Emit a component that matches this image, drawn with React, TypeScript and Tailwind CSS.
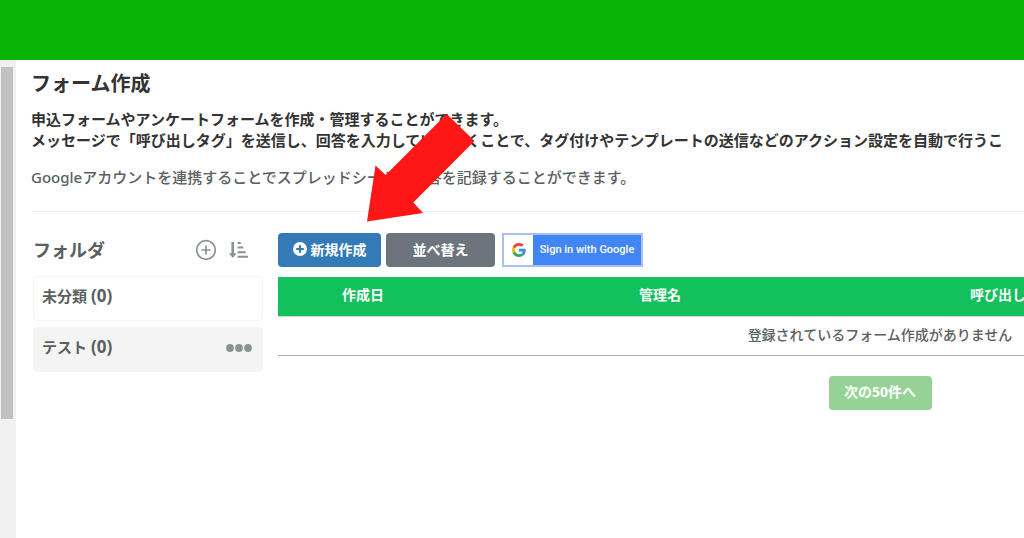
import React from 'react';

const folders = [
  { name: '未分類', count: 0, active: false },
  { name: 'テスト', count: 0, active: true },
];

const columns = [
  { label: '作成日', width: 'w-[170px]' },
  { label: '管理名', width: 'w-[424px]' },
  { label: '呼び出しタグ', width: 'w-[280px]' },
  { label: '', width: '' },
];

const PlusCircleOutline = () => (
  <svg width="22" height="22" viewBox="0 0 22 22" fill="none" stroke="#8a9393" strokeWidth="1.7">
    <circle cx="11" cy="11" r="9.3" />
    <path d="M11 6.5v9M6.5 11h9" />
  </svg>
);

const SortIcon = () => (
  <svg width="20" height="18" viewBox="0 0 20 18" fill="#8a9393">
    <path d="M2.4 1h2.6v11.3h2.6L3.7 17 0 12.3h2.4z" />
    <path d="M8.6 1h3.2v2H8.6zM8.6 5.6h5.6v2H8.6zM8.6 10.2h8v2h-8zM8.6 14.8h10.4v2H8.6z" />
  </svg>
);

const PlusCircleSolid = () => (
  <svg width="14" height="14" viewBox="0 0 14 14">
    <circle cx="7" cy="7" r="7" fill="#fff" />
    <path d="M7 3.2v7.6M3.2 7h7.6" stroke="#337ab7" strokeWidth="2.2" />
  </svg>
);

const Dots = () => (
  <svg width="26" height="8" viewBox="0 0 26 8" fill="#8a9393">
    <circle cx="4" cy="4" r="3.9" />
    <circle cx="13" cy="4" r="3.9" />
    <circle cx="22" cy="4" r="3.9" />
  </svg>
);

const GoogleLogo = () => (
  <svg width="14" height="14" viewBox="0 0 48 48">
    <path fill="#EA4335" d="M24 9.5c3.54 0 6.71 1.22 9.21 3.6l6.85-6.85C35.9 2.38 30.47 0 24 0 14.62 0 6.51 5.38 2.56 13.22l7.98 6.19C12.43 13.72 17.74 9.5 24 9.5z" />
    <path fill="#4285F4" d="M46.98 24.55c0-1.57-.15-3.09-.38-4.55H24v9.02h12.94c-.58 2.96-2.26 5.48-4.78 7.18l7.73 6c4.51-4.18 7.09-10.36 7.09-17.65z" />
    <path fill="#FBBC05" d="M10.53 28.59A14.5 14.5 0 0 1 9.77 24c0-1.6.27-3.14.76-4.59l-7.98-6.19A23.9 23.9 0 0 0 0 24c0 3.88.92 7.54 2.56 10.78l7.97-6.19z" />
    <path fill="#34A853" d="M24 48c6.48 0 11.93-2.13 15.89-5.81l-7.73-6c-2.15 1.45-4.92 2.3-8.16 2.3-6.26 0-11.57-4.22-13.47-9.91l-7.98 6.19C6.51 42.62 14.62 48 24 48z" />
  </svg>
);

const FolderList = () => (
  <aside className="w-[230px] shrink-0">
    <div className="flex h-[34px] items-center justify-between pr-3.5">
      <h2 className="text-[18px] font-bold">フォルダ</h2>
      <div className="flex items-center gap-3">
        <button type="button" aria-label="フォルダを追加"><PlusCircleOutline /></button>
        <button type="button" aria-label="フォルダを並べ替え"><SortIcon /></button>
      </div>
    </div>
    <ul className="mt-[9px] flex flex-col gap-1.5">
      {folders.map((f) => (
        <li
          key={f.name}
          className={`flex h-[45px] items-center justify-between rounded border border-[#f4f4f4] pr-2.5 pb-1 pl-2 text-[15px] font-bold ${f.active ? 'bg-[#f4f4f4]' : 'bg-white'}`}
        >
          <span>{f.name} <span className="text-[17px] leading-5">({f.count})</span></span>
          {f.active && <button type="button" aria-label="メニュー"><Dots /></button>}
        </li>
      ))}
    </ul>
  </aside>
);

const FormTable = () => (
  <table className="mt-2.5 w-full table-fixed text-[14px]">
    <thead>
      <tr className="h-[39px] bg-[#12c15c] text-white">
        {columns.map((c, i) => (
          <th key={i} className={`pb-1 font-bold ${c.width}`}>{c.label}</th>
        ))}
      </tr>
    </thead>
    <tbody>
      <tr className="h-[39px] border-t border-b border-t-[#d5d5d5] border-b-[#a8adad]">
        <td colSpan={4} className="pb-0.5 text-center font-medium">登録されているフォーム作成がありません</td>
      </tr>
    </tbody>
  </table>
);

const Arrow = () => (
  <svg className="pointer-events-none absolute top-[54px] left-[367px]" width="108" height="108" viewBox="0 0 108 108">
    <path d="M0 107.5 8.5 51.5 18.7 61 79.7 0 107.5 27 46.3 88.5 56 99z" fill="#ff1616" />
  </svg>
);

export default function App() {
  return (
    <div className="flex min-h-screen flex-col overflow-hidden bg-white font-['Noto_Sans','Noto_Sans_CJK_JP',sans-serif] text-[#596060]">
      <header className="h-[60px] bg-[#09b305]" />

      <div className="relative flex flex-1">
        {/* scroll track */}
        <div className="w-4 shrink-0 bg-[#f1f1f1] pt-[7px] pr-[3px] pl-px">
          <div className="h-[352px] bg-[#c1c1c1]" />
        </div>

        <main className="min-w-0 flex-1 overflow-hidden pt-2.5 pl-[15px]">
          <h1 className="text-[20px] leading-7 font-bold text-[#333]">フォーム作成</h1>
          <p className="mt-[11px] text-[15px] leading-[21px] font-bold whitespace-nowrap text-[#333]">
            申込フォームやアンケートフォームを作成・管理することができます。<br />
            メッセージで「呼び出しタグ」を送信し、回答を入力していただくことで、タグ付けやテンプレートの送信などのアクション設定を自動で行うこ
          </p>
          <p className="mt-4 text-[15px] leading-[21px] font-medium whitespace-nowrap">
            Googleアカウントを連携することでスプレッドシートに回答を記録することができます。
          </p>
          <hr className="mt-[23px] border-[#f1f1f1]" />

          <div className="mt-[21px] flex gap-[15px] pl-0.5">
            <FolderList />
            <section className="w-full min-w-[1204px]">
              <div className="flex">
                <button type="button" className="flex h-[34px] w-[103px] items-center justify-center gap-1 rounded bg-[#337ab7] pb-0.5 text-[14px] font-bold text-white">
                  <PlusCircleSolid />
                  新規作成
                </button>
                <button type="button" className="ml-[5px] h-[34px] w-[109px] rounded bg-[#6c757d] pb-0.5 text-[14px] font-bold text-white">
                  並べ替え
                </button>
                <button type="button" className="ml-[7px] flex h-[34px] w-[141px] items-center border-2 border-[#a6c1f2] bg-[#4285f4] text-white">
                  <span className="flex h-full w-[29px] items-center justify-center bg-white">
                    <GoogleLogo />
                  </span>
                  <span className="flex-1 text-center font-[Roboto,sans-serif] text-[11px] font-medium">Sign in with Google</span>
                </button>
              </div>
              <FormTable />
              <div className="mt-5 flex justify-center">
                <button type="button" disabled className="h-[34px] w-[103px] rounded bg-[#96d296] pb-0.5 text-[14px] font-bold text-white">
                  次の50件へ
                </button>
              </div>
            </section>
          </div>
        </main>

        <Arrow />
      </div>
    </div>
  );
}
